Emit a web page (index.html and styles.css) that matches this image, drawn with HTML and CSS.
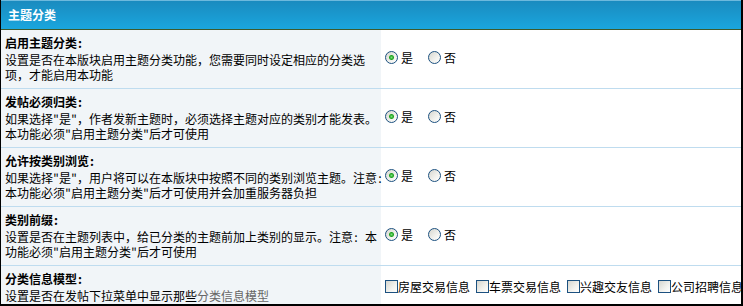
FILE: index.html
```html
<!DOCTYPE html>
<html>
<head>
    <meta charset="UTF-8">
    <title>主题分类</title>
    <link rel="stylesheet" href="styles.css">
</head>
<body>
    <div class="panel">
        <div class="header">主题分类</div>

        <div class="row">
            <div class="label">
                <b class="title">启用主题分类:</b>
                <span class="desc">设置是否在本版块启用主题分类功能，您需要同时设定相应的分类选项，才能启用本功能</span>
            </div>
            <div class="field">
                <label class="opt"><input type="radio" name="threadtypes" value="1" checked>是</label>
                <label class="opt"><input type="radio" name="threadtypes" value="0">否</label>
            </div>
        </div>

        <div class="row">
            <div class="label">
                <b class="title">发帖必须归类:</b>
                <span class="desc">如果选择"是"，作者发新主题时，必须选择主题对应的类别才能发表。本功能必须"启用主题分类"后才可使用</span>
            </div>
            <div class="field">
                <label class="opt"><input type="radio" name="required" value="1" checked>是</label>
                <label class="opt"><input type="radio" name="required" value="0">否</label>
            </div>
        </div>

        <div class="row">
            <div class="label">
                <b class="title">允许按类别浏览:</b>
                <span class="desc">如果选择"是"，用户将可以在本版块中按照不同的类别浏览主题。注意:本功能必须"启用主题分类"后才可使用并会加重服务器负担</span>
            </div>
            <div class="field">
                <label class="opt"><input type="radio" name="listable" value="1" checked>是</label>
                <label class="opt"><input type="radio" name="listable" value="0">否</label>
            </div>
        </div>

        <div class="row">
            <div class="label">
                <b class="title">类别前缀:</b>
                <span class="desc">设置是否在主题列表中，给已分类的主题前加上类别的显示。注意: 本功能必须"启用主题分类"后才可使用</span>
            </div>
            <div class="field">
                <label class="opt"><input type="radio" name="prefix" value="1" checked>是</label>
                <label class="opt"><input type="radio" name="prefix" value="0">否</label>
            </div>
        </div>

        <div class="row">
            <div class="label">
                <b class="title">分类信息模型:</b>
                <span class="desc">设置是否在发帖下拉菜单中显示那些<a href="#" class="link">分类信息模型</a></span>
            </div>
            <div class="field">
                <label class="chk"><input type="checkbox" name="model1">房屋交易信息</label>
                <label class="chk"><input type="checkbox" name="model2">车票交易信息</label>
                <label class="chk"><input type="checkbox" name="model3">兴趣交友信息</label>
                <label class="chk"><input type="checkbox" name="model4">公司招聘信息</label>
            </div>
        </div>
    </div>
</body>
</html>
```

FILE: styles.css
```css
body {
    margin: 0;
    font: 12px "Noto Sans Mono CJK SC", "Noto Sans CJK SC", sans-serif;
    color: #000;
    background: #fff;
}

.panel {
    width: 743px;
    height: 306px;
    box-sizing: border-box;
    border-left: 1px solid #000;
    border-right: 2px solid #000;
    border-bottom: 2px solid #000;
    overflow: hidden;
}

.header {
    height: 28px;
    line-height: 28px;
    padding-left: 7px;
    border-top: 1px solid #6cb9dd;
    border-bottom: 1px solid #3e5a2c;
    background: linear-gradient(#1a8bbf, #1aa6de);
    color: #fff;
    font-weight: bold;
}

.row {
    display: grid;
    grid-template-columns: 380px 1fr;
    border-bottom: 1px solid #bfdcef;
}

.label {
    padding: 4px 0 6px 4px;
    background: #f1f5f8;
}

.title {
    display: block;
    line-height: 18px;
}

.desc {
    display: block;
    width: 379px;
    line-height: 15px;
}

.link {
    color: #666;
    text-decoration: none;
}

.field {
    display: flex;
    align-items: center;
    padding: 0 0 3px 4px;
    white-space: nowrap;
}

.opt,
.chk {
    display: flex;
    align-items: center;
}

.opt {
    margin-right: 15px;
}

.chk {
    margin-right: 6px;
}

.opt input,
.chk input {
    appearance: none;
    -webkit-appearance: none;
    width: 13px;
    height: 13px;
    margin: 0;
    box-sizing: border-box;
    border: 1px solid #1c5180;
    background: linear-gradient(135deg, #d6d6cf, #f2f2ee 60%, #fff);
}

.opt input {
    border-radius: 50%;
    margin-right: 3px;
}

.opt input:checked {
    background: radial-gradient(circle, #7be07b 0, #21a321 2px, transparent 3px),
                linear-gradient(135deg, #d6d6cf, #f2f2ee 60%, #fff);
}
```
